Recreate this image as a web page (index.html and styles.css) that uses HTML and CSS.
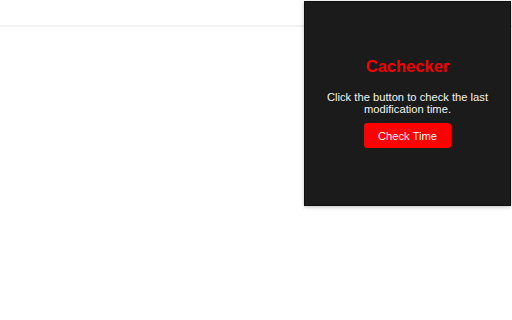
FILE: index.html
```html
<!DOCTYPE html>
<html lang="en">
<head>
  <meta charset="UTF-8" />
  <title>Cachecker</title>
  <link rel="stylesheet" href="styles.css">
</head>
<body>
  <div class="topbar"></div>

  <div class="popup">
    <h1>Cachecker</h1>
    <p>Click the button to check the last modification time.</p>
    <button id="checkBtn">Check Time</button>
  </div>
</body>
</html>
```

FILE: styles.css
```css
body {
  margin: 0;
  font-family: "Liberation Sans", Arial, sans-serif;
  background: #fff;
}

.topbar {
  height: 25px;
  border-bottom: 2px solid #f1f1f1;
}

.popup {
  position: absolute;
  top: 1px;
  right: 1px;
  width: 207px;
  height: 205px;
  box-sizing: border-box;
  padding: 55px 12px 0;
  background: #1b1b1b;
  border: 1px solid #0e0e0e;
  box-shadow: 0 1px 4px rgba(0, 0, 0, 0.25);
  text-align: center;
  color: #f2f2f2;
}

h1 {
  margin: 0 0 15px;
  font-size: 16.5px;
  line-height: 19px;
  color: #f00000;
}

p {
  margin: 0 0 8px;
  font-size: 11.2px;
  line-height: 12px;
}

button {
  width: 87px;
  height: 25px;
  padding: 0;
  font-family: inherit;
  font-size: 11.2px;
  background: #ff0000;
  color: #fff;
  border: none;
  border-radius: 3px;
  cursor: pointer;
}
```
